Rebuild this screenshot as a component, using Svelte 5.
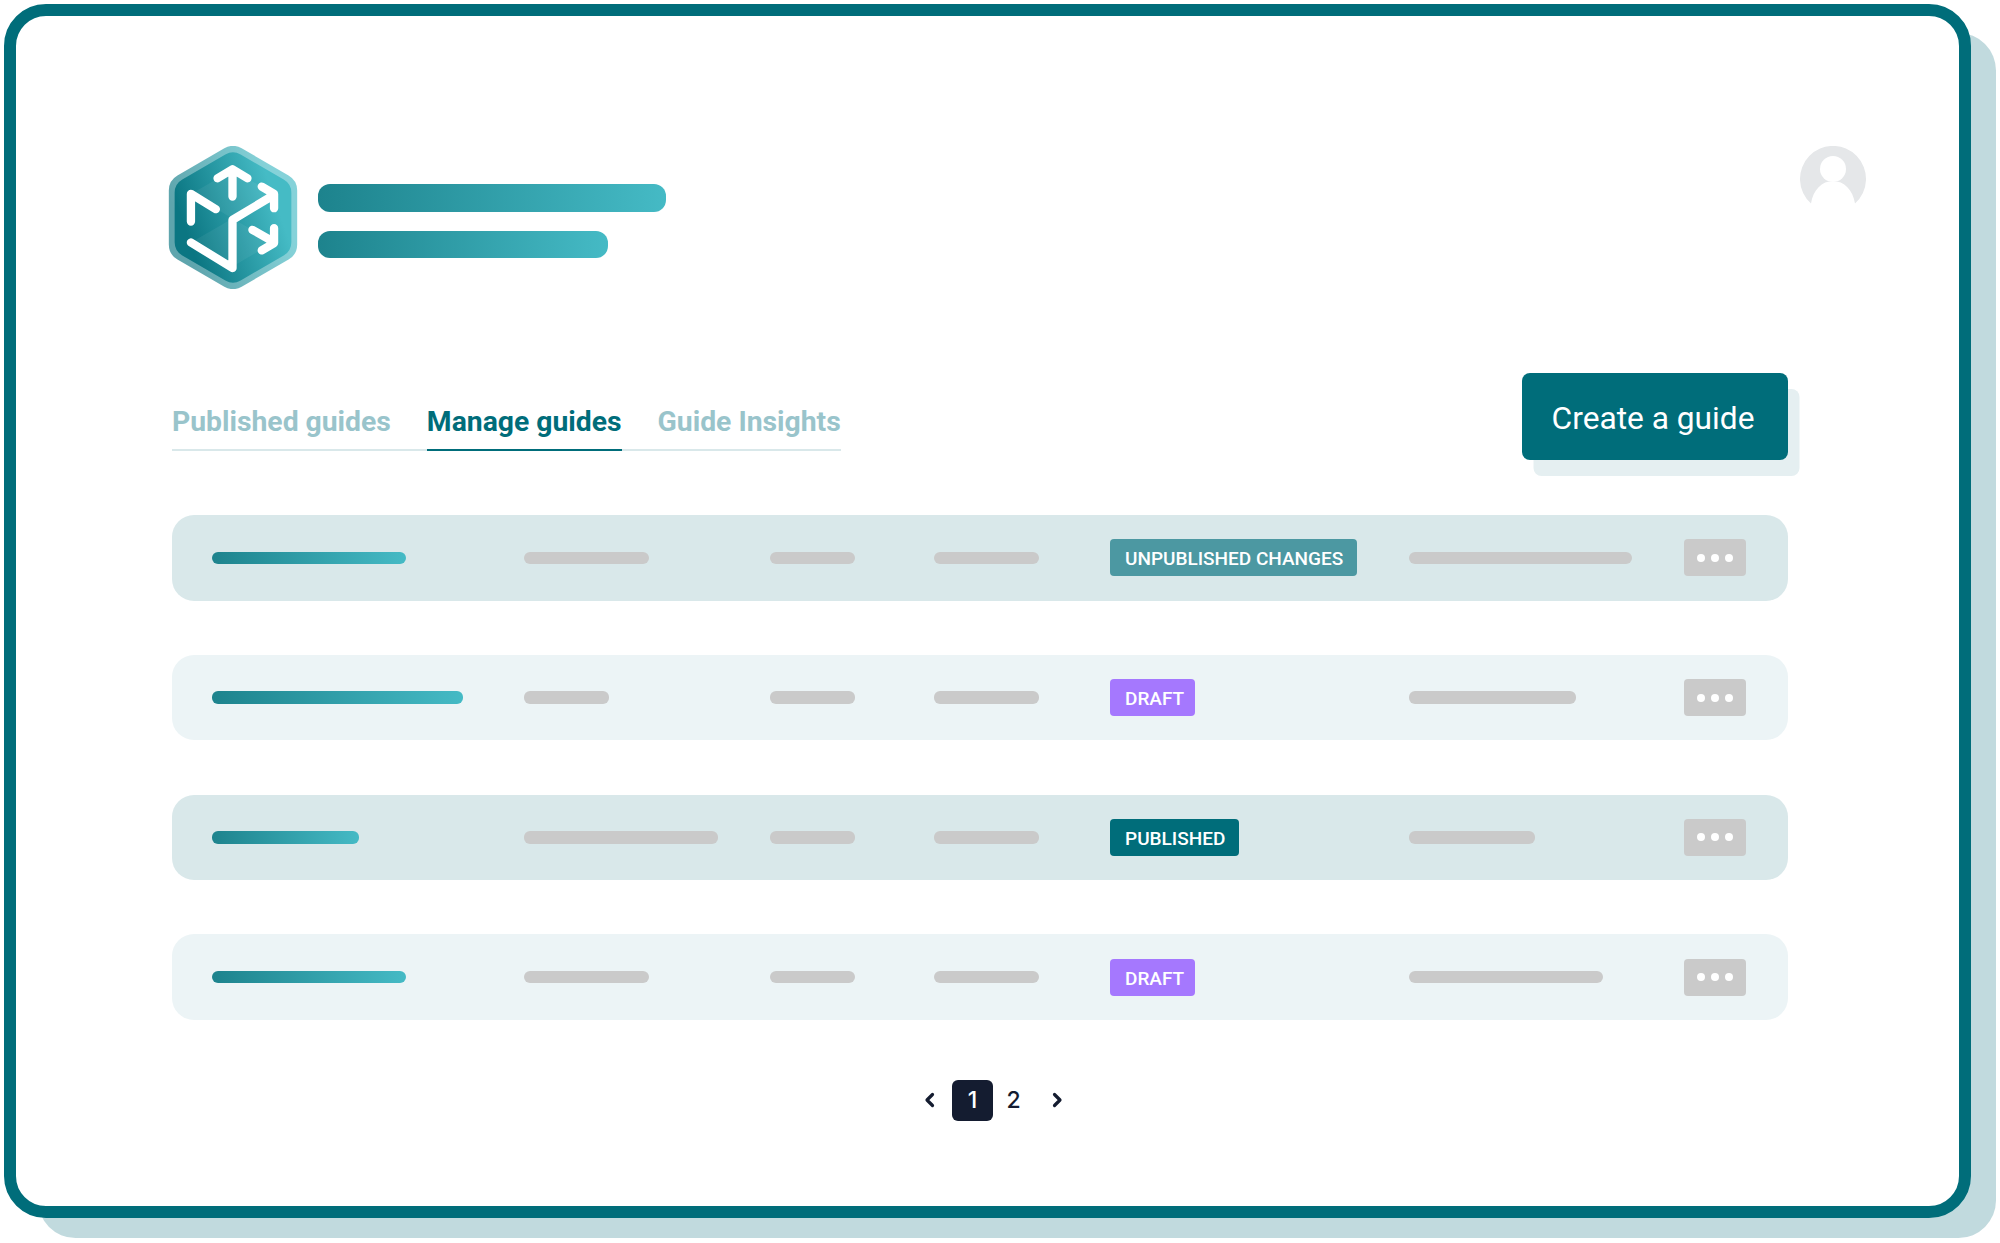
<script>
  const tabs = [
    { label: 'Published guides' },
    { label: 'Manage guides', active: true },
    { label: 'Guide Insights' }
  ];

  const rows = [
    { title: 194, a: 125, b: 85, c: 105, status: 'UNPUBLISHED CHANGES', kind: 'changes', d: 223 },
    { title: 251, a: 85, b: 85, c: 105, status: 'DRAFT', kind: 'draft', d: 167 },
    { title: 147, a: 194, b: 85, c: 105, status: 'PUBLISHED', kind: 'published', d: 126 },
    { title: 194, a: 125, b: 85, c: 105, status: 'DRAFT', kind: 'draft', d: 194 }
  ];
</script>

<div class="page-wrap">
  <div class="frame">
    <header class="top">
      <div class="brand">
        <svg class="logo" viewBox="80 70 403 446" aria-hidden="true">
          <defs>
            <linearGradient id="hex" x1="0" y1="0.75" x2="1" y2="0.35">
              <stop offset="0" stop-color="#0b7682" />
              <stop offset="1" stop-color="#45bbc5" />
            </linearGradient>
          </defs>
          <path class="hex-outer" d="M281.500 130 422.500 211.500V374.500L281.500 456 140.500 374.500V211.500Z" fill="url(#hex)" />
          <path class="hex-inner" d="M281.500 143.500 411 218.300V367.700L281.500 442.500 152 367.700V218.300Z" fill="url(#hex)" />
          <path class="facet" d="M155 368 280 296 405 368 280 440Z" />
          <path class="facet" d="M155 222 280 150 405 222 280 296Z" />
          <g class="arrows">
            <path d="M280 230V150M235 175 280 148 325 175" />
            <path d="M155 305V222L230 268" />
            <path d="M155 368 280 445V300L400 228M368 200 405 222V265" />
            <path d="M340 330 405 367M405 325V370L368 392" />
          </g>
        </svg>
        <div class="brand-lines">
          <span class="grad line-lg"></span>
          <span class="grad line-sm"></span>
        </div>
      </div>
      <svg class="avatar" viewBox="0 0 66 66" aria-hidden="true">
        <path d="M11 57.500A33 33 0 1 1 55 57.500C53 44 44 35 33 35S13 44 11 57.500Z" fill="#e5e7e9" />
        <circle cx="33" cy="22" r="14" fill="#e5e7e9" />
        <circle cx="33" cy="23" r="13" fill="#fff" />
      </svg>
    </header>

    <div class="toolbar">
      <nav class="tabs">
        {#each tabs as tab}
          <span class="tab" class:active={tab.active}>{tab.label}</span>
        {/each}
      </nav>
      <button class="create">Create a guide</button>
    </div>

    <div class="rows">
      {#each rows as row, i}
        <div class="row" class:strong={i % 2 === 0}>
          <span class="cell"><span class="grad bar" style="width:{row.title}px"></span></span>
          <span class="cell"><span class="bar grey" style="width:{row.a}px"></span></span>
          <span class="cell"><span class="bar grey" style="width:{row.b}px"></span></span>
          <span class="cell"><span class="bar grey" style="width:{row.c}px"></span></span>
          <span class="cell"><span class="badge {row.kind}">{row.status}</span></span>
          <span class="cell"><span class="bar grey" style="width:{row.d}px"></span></span>
          <span class="more"><i></i><i></i><i></i></span>
        </div>
      {/each}
    </div>

    <nav class="pager">
      <svg class="chev" viewBox="0 0 14 18" aria-hidden="true"><path d="M10.500 3.500 5 9l5.500 5.500" /></svg>
      <span class="page current">1</span>
      <span class="page">2</span>
      <svg class="chev" viewBox="0 0 14 18" aria-hidden="true"><path d="M3.500 3.500 9 9l-5.500 5.500" /></svg>
    </nav>
  </div>
</div>

<style>
  :global(body) {
    margin: 0;
    background: #fff;
    font-family: Roboto, "Liberation Sans", sans-serif;
  }

  .page-wrap {
    box-sizing: border-box;
    height: 1243px;
    padding: 4px 0 0 4px;
    overflow: hidden;
  }

  .frame {
    box-sizing: border-box;
    width: 1967px;
    height: 1214px;
    padding: 130px 0 0 156px;
    background: #fff;
    border: 12px solid #006d7a;
    border-radius: 42px;
    box-shadow: 29.500px 24.500px 0 -4.500px #c1dade;
  }

  .top {
    display: flex;
    justify-content: space-between;
    align-items: flex-start;
    width: 1616px;
    height: 227px;
  }

  .brand {
    display: flex;
    align-items: center;
    gap: 18px;
    margin-left: -3px;
  }

  .logo {
    width: 134px;
    height: 149px;
    margin: -3px 0 0 -3px;
  }

  .hex-outer {
    stroke: url(#hex);
    stroke-width: 104;
    stroke-linejoin: round;
    opacity: 0.65;
  }

  .hex-inner {
    stroke: url(#hex);
    stroke-width: 92;
    stroke-linejoin: round;
  }

  .facet {
    fill: #fff;
    opacity: 0.06;
  }

  .arrows path {
    fill: none;
    stroke: #fff;
    stroke-width: 25;
    stroke-linecap: round;
    stroke-linejoin: round;
  }

  .brand-lines {
    display: flex;
    flex-direction: column;
    gap: 19px;
    margin-top: 3px;
  }

  .grad {
    display: block;
    background: linear-gradient(90deg, #1d838d, #45bac5);
  }

  .line-lg {
    width: 348px;
    height: 28px;
    border-radius: 12px;
  }

  .line-sm {
    width: 290px;
    height: 27px;
    border-radius: 12px;
  }

  .avatar {
    width: 66px;
    height: 66px;
    margin-right: -78px;
  }

  .toolbar {
    display: flex;
    justify-content: space-between;
    align-items: flex-end;
    width: 1616px;
  }

  .tabs {
    display: flex;
    gap: 36px;
    margin-bottom: 9px;
    border-bottom: 2px solid #d9e8ea;
    font-size: 28.300px;
    font-weight: 700;
    line-height: 32px;
  }

  .tab {
    padding: 1px 0 11px;
    margin-bottom: -2px;
    color: #99c4cb;
  }

  .tab.active {
    color: #006d7a;
    border-bottom: 2px solid #006d7a;
  }

  .create {
    width: 266px;
    height: 87px;
    padding: 3px 4px 0 0;
    border: 0;
    border-radius: 8px;
    background: #006d7a;
    box-shadow: 11.500px 16px 0 #e5eff1;
    color: #fff;
    font: 400 31.700px Roboto, sans-serif;
    cursor: pointer;
  }

  .rows {
    display: flex;
    flex-direction: column;
    gap: 54.300px;
    width: 1616px;
    margin: 55px 0 0 -0.500px;
  }

  .row {
    display: grid;
    grid-template-columns: 312.500px 246px 164px 176px 299px 275px 62px;
    align-items: center;
    height: 85.500px;
    padding-left: 40px;
    border-radius: 22px;
    background: #ecf4f6;
  }

  .row.strong {
    background: #d9e8ea;
  }

  .cell {
    display: flex;
    align-items: center;
  }

  .bar {
    display: block;
    height: 12.500px;
    border-radius: 6px;
  }

  .bar.grey {
    background: #cacaca;
  }

  .badge {
    display: block;
    box-sizing: border-box;
    height: 37px;
    padding: 0 14px 0 15px;
    border-radius: 4px;
    color: #fff;
    font-size: 19px;
    font-weight: 500;
    line-height: 39px;
    white-space: nowrap;
  }

  .changes {
    background: #4c98a2;
  }

  .draft {
    width: 85px;
    background: #a578fe;
  }

  .published {
    background: #006d7a;
  }

  .more {
    display: flex;
    justify-content: center;
    align-items: center;
    gap: 6px;
    width: 62px;
    height: 37px;
    border-radius: 4px;
    background: #cacaca;
  }

  .more i {
    width: 8px;
    height: 8px;
    border-radius: 50%;
    background: #fff;
  }

  .pager {
    display: flex;
    justify-content: center;
    align-items: center;
    box-sizing: border-box;
    width: 1616px;
    margin-top: 60px;
    padding-left: 27px;
    color: #141c30;
    font: 500 23px Inter, sans-serif;
  }

  .chev {
    width: 14px;
    height: 18px;
  }

  .chev path {
    fill: none;
    stroke: #141c30;
    stroke-width: 3.200;
    stroke-linecap: round;
    stroke-linejoin: round;
  }

  .page {
    width: 41px;
    height: 41px;
    line-height: 41px;
    text-align: center;
    border-radius: 6px;
  }

  .page.current {
    margin-left: 16px;
    background: #141c30;
    color: #fff;
  }

  .page + .page {
    margin-right: 17px;
  }
</style>
